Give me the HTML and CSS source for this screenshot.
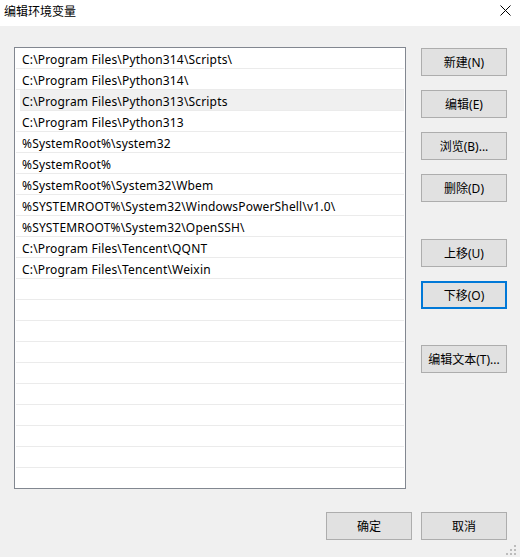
FILE: index.html
```html
<!DOCTYPE html>
<html lang="zh-CN">
<head>
  <meta charset="UTF-8">
  <title>编辑环境变量</title>
  <link rel="stylesheet" href="styles.css">
</head>
<body>
  <div class="window">

    <!-- Barra de título -->
    <div class="title-bar">
      <span class="title">编辑环境变量</span>
      <svg class="close-icon" width="11" height="11" viewBox="0 0 11 11">
        <path d="M0.5 0.5 L10.5 10.5 M10.5 0.5 L0.5 10.5" stroke="#000" stroke-width="1" fill="none"/>
      </svg>
    </div>

    <!-- Contenido del diálogo -->
    <div class="content">
      <div class="main">
        <ul class="path-list">
          <li>C:\Program Files\Python314\Scripts\</li>
          <li>C:\Program Files\Python314\</li>
          <li class="hover">C:\Program Files\Python313\Scripts</li>
          <li>C:\Program Files\Python313</li>
          <li>%SystemRoot%\system32</li>
          <li>%SystemRoot%</li>
          <li>%SystemRoot%\System32\Wbem</li>
          <li>%SYSTEMROOT%\System32\WindowsPowerShell\v1.0\</li>
          <li>%SYSTEMROOT%\System32\OpenSSH\</li>
          <li>C:\Program Files\Tencent\QQNT</li>
          <li>C:\Program Files\Tencent\Weixin</li>
          <li></li><li></li><li></li><li></li><li></li>
          <li></li><li></li><li></li><li></li><li></li>
        </ul>

        <div class="side-buttons">
          <button class="btn">新建(N)</button>
          <button class="btn">编辑(E)</button>
          <button class="btn">浏览(B)...</button>
          <button class="btn">删除(D)</button>
          <button class="btn gap-top">上移(U)</button>
          <button class="btn focused">下移(O)</button>
          <button class="btn gap-top-lg">编辑文本(T)...</button>
        </div>
      </div>

      <div class="footer">
        <button class="btn">确定</button>
        <button class="btn">取消</button>
      </div>
    </div>

    <!-- Agarre de redimensionado -->
    <svg class="grip" width="12" height="12" viewBox="0 0 12 12">
      <rect x="8" y="0" width="2" height="2" fill="#bcbcbc"/>
      <rect x="4" y="4" width="2" height="2" fill="#bcbcbc"/>
      <rect x="8" y="4" width="2" height="2" fill="#bcbcbc"/>
      <rect x="0" y="8" width="2" height="2" fill="#bcbcbc"/>
      <rect x="4" y="8" width="2" height="2" fill="#bcbcbc"/>
      <rect x="8" y="8" width="2" height="2" fill="#bcbcbc"/>
    </svg>
  </div>
</body>
</html>
```

FILE: styles.css
```css
/* Estilos generales */
body {
  margin: 0;
  font-family: "Noto Sans", "Noto Sans CJK SC", sans-serif;
  font-size: 12px;
  color: #000;
}

.window {
  position: relative;
  width: 520px;
  height: 557px;
  background: #f0f0f0;
  display: flex;
  flex-direction: column;
}

/* Barra de título */
.title-bar {
  height: 26px;
  background: #fff;
  display: flex;
  align-items: center;
  justify-content: space-between;
  padding: 0 9px 0 4px;
  flex-shrink: 0;
}

.title {
  font-family: "Noto Sans CJK SC", sans-serif;
  font-size: 12px;
  margin-top: -5px;
}

.close-icon {
  margin-top: -6px;
}

.content {
  flex: 1;
  display: flex;
  flex-direction: column;
  padding: 21px 13px 0 14px;
}

.main {
  display: flex;
  gap: 15px;
}

/* Lista de rutas */
.path-list {
  list-style: none;
  margin: 0;
  padding: 0 1px;
  width: 390px;
  height: 440px;
  border: 1px solid #828790;
  background: #fff;
  overflow: hidden;
  letter-spacing: 0.17px;
}

.path-list li {
  height: 18px;
  line-height: 20px;
  padding-top: 2px;
  padding-left: 6px;
  border-bottom: 1px solid #ebebeb;
  white-space: nowrap;
}

.path-list li.hover {
  background: #f0f0f0;
  margin-left: 4px;
  padding-left: 2px;
}

/* Botones */
.btn {
  width: 86px;
  height: 28px;
  background: #e1e1e1;
  border: 1px solid #adadad;
  font-family: "Noto Sans", "Noto Sans CJK SC", sans-serif;
  font-size: 12px;
  color: #000;
  padding: 0;
}

.btn.focused {
  border: 2px solid #0078d7;
}

.side-buttons {
  display: flex;
  flex-direction: column;
  gap: 14px;
  padding-top: 1px;
}

.side-buttons .gap-top {
  margin-top: 23px;
}

.side-buttons .gap-top-lg {
  margin-top: 22px;
}

.footer {
  display: flex;
  justify-content: flex-end;
  gap: 9px;
  margin-top: 23px;
}

.grip {
  position: absolute;
  right: 2px;
  bottom: 0;
}
```
